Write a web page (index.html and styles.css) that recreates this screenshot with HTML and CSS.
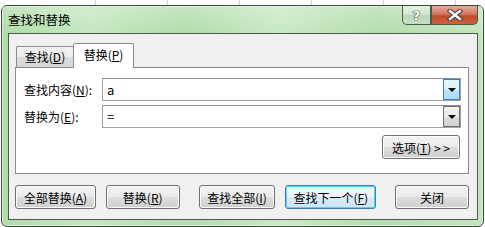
FILE: index.html
```html
<!DOCTYPE html>
<html lang="zh-CN">
<head>
  <meta charset="UTF-8">
  <meta name="viewport" content="width=device-width, initial-scale=1.0">
  <title>查找和替换</title>
  <link rel="stylesheet" href="styles.css">
</head>
<body>

  <div class="window">
    <div class="titlebar">
      <span class="title">查找和替换</span>
      <div class="caption-btns">
        <button class="cap-help">?</button>
        <button class="cap-close">
          <svg width="18" height="12" viewBox="0 0 18 12">
            <path d="M4 2 L14 10 M14 2 L4 10" stroke="#3a3a3a" stroke-width="4.4" stroke-linecap="square"/>
            <path d="M4 2 L14 10 M14 2 L4 10" stroke="#ffffff" stroke-width="2.4" stroke-linecap="square"/>
          </svg>
        </button>
      </div>
    </div>

    <div class="client">
      <!-- Abas -->
      <div class="tabs">
        <div class="tab">查找(<u>D</u>)</div>
        <div class="tab active">替换(<u>P</u>)</div>
      </div>

      <div class="panel">
        <div class="row">
          <label class="row-label">查找内容(<u>N</u>):</label>
          <div class="combo">
            <span class="combo-text">a</span>
            <span class="combo-btn hot"><i class="arrow"></i></span>
          </div>
        </div>
        <div class="row">
          <label class="row-label">替换为(<u>E</u>):</label>
          <div class="combo">
            <span class="combo-text">=</span>
            <span class="combo-btn"><i class="arrow"></i></span>
          </div>
        </div>
        <div class="options-row">
          <button class="btn btn-options">选项(<u>T</u>) &gt; &gt;</button>
        </div>
      </div>

      <!-- Botões de ação -->
      <div class="actions">
        <button class="btn w81">全部替换(<u>A</u>)</button>
        <button class="btn w74 gap10">替换(<u>R</u>)</button>
        <button class="btn w77 gap19">查找全部(<u>I</u>)</button>
        <button class="btn w91 gap10 focused">查找下一个(<u>F</u>)</button>
        <button class="btn w74 gap19">关闭</button>
      </div>
    </div>
  </div>

</body>
</html>
```

FILE: styles.css
```css
/* Fundo da planilha */
body {
  margin: 0;
  padding: 5px 0 0 1px;
  height: 227px;
  box-sizing: border-box;
  overflow: hidden;
  font-family: "Noto Sans CJK SC", "Microsoft YaHei", sans-serif;
  font-size: 12px;
  color: #000;
  background: repeating-linear-gradient(90deg, #fff 0 71px, #d4d4d4 71px 72px);
  background-position: 24px 0;
}

u {
  text-decoration: underline;
  text-underline-offset: 1px;
}

/* Janela */
.window {
  width: 483px;
  height: 222px;
  box-sizing: border-box;
  border: 1px solid #3a4a3a;
  border-radius: 6px;
  background: linear-gradient(90deg, #b0dcaa 0%, #c4e8be 18%, #b2dcac 38%, #c8eac2 58%, #b4ddae 78%, #c2e6bc 100%);
  box-shadow: inset 0 0 0 1px #d8f0d4;
}

.titlebar {
  height: 27px;
  display: flex;
  justify-content: space-between;
  align-items: flex-start;
  padding-left: 6px;
  background: linear-gradient(180deg, rgba(255,255,255,0.25), rgba(255,255,255,0));
}

.title {
  font-size: 12.5px;
  line-height: 14px;
  margin-top: 7px;
}

.caption-btns {
  display: flex;
  margin-right: 5px;
}

.caption-btns button {
  height: 19px;
  border: 1px solid #4a5a4a;
  border-top: none;
  padding: 0;
  display: flex;
  align-items: center;
  justify-content: center;
}

.cap-help {
  width: 29px;
  border-radius: 0 0 0 5px;
  background: linear-gradient(180deg, #e6f2e4 0%, #cfe3cc 50%, #bcd6b8 51%, #c8e0c4 100%);
  font-family: "DejaVu Sans", sans-serif;
  font-size: 13px;
  font-weight: bold;
  color: #fff;
  text-shadow: 0 0 1px #333, 0 0 1px #333, 0 0 1px #333;
}

.cap-close {
  width: 47px;
  border-left: none;
  border-radius: 0 0 5px 0;
  background: linear-gradient(180deg, #e9a898 0%, #d27a63 45%, #c14a2a 55%, #d0603f 100%);
  border-color: #5a2a20;
}

/* Área cliente */
.client {
  height: 187px;
  margin: 0 5px 0 6px;
  box-sizing: border-box;
  border: 1px solid #4b5a4b;
  background: #f0f0f0;
  padding: 0 8px 0 6px;
}

.tabs {
  display: flex;
  align-items: flex-end;
  height: 33px;
  padding-left: 1px;
  position: relative;
  z-index: 1;
}

.tab {
  box-sizing: border-box;
  height: 21px;
  width: 57px;
  border: 1px solid #898c95;
  border-right: none;
  border-bottom: none;
  border-radius: 2px 0 0 0;
  background: linear-gradient(180deg, #f2f2f2 0%, #ebebeb 50%, #dddddd 51%, #d6d6d6 100%);
  text-align: center;
  line-height: 20px;
}

.tab.active {
  height: 25px;
  width: 61px;
  border-right: 1px solid #898c95;
  border-radius: 2px 2px 0 0;
  background: #fff;
  margin-bottom: -1px;
  line-height: 22px;
}

.panel {
  box-sizing: border-box;
  height: 107px;
  border: 1px solid #898c95;
  background: #fff;
  padding: 10px 7px 10px 8px;
}

.row {
  display: flex;
  align-items: center;
  height: 23px;
  margin-bottom: 4px;
}

.row-label {
  width: 78px;
  flex: none;
}

.combo {
  flex: 1;
  height: 23px;
  box-sizing: border-box;
  border: 1px solid #a0a0a0;
  border-top-color: #8e8f8f;
  display: flex;
  align-items: center;
  justify-content: space-between;
}

.combo-text {
  padding-left: 4px;
  font-size: 13px;
}

.combo-btn {
  width: 17px;
  height: 21px;
  box-sizing: border-box;
  border: 1px solid #707070;
  background: linear-gradient(180deg, #f2f2f2 0%, #ebebeb 50%, #dddddd 51%, #cfcfcf 100%);
  display: flex;
  align-items: center;
  justify-content: center;
}

.combo-btn.hot {
  border-color: #3c7fb1;
  background: linear-gradient(180deg, #eaf6fd 0%, #d9f0fc 50%, #bee6fd 51%, #a7d9f5 100%);
}

.arrow {
  width: 0;
  height: 0;
  border-left: 4px solid transparent;
  border-right: 4px solid transparent;
  border-top: 4px solid #000;
}

.options-row {
  display: flex;
  justify-content: flex-end;
  margin-top: 7px;
  padding-right: 1px;
}

/* Botões */
.btn {
  height: 24px;
  box-sizing: border-box;
  border: 1px solid #707070;
  border-radius: 3px;
  background: linear-gradient(180deg, #f2f2f2 0%, #ebebeb 50%, #dddddd 51%, #cfcfcf 100%);
  box-shadow: inset 0 0 0 1px #fcfcfc;
  font-family: inherit;
  font-size: 12px;
  color: #000;
  padding: 0;
  cursor: pointer;
}

.btn-options {
  width: 78px;
}

.btn.focused {
  border-color: #3c7fb1;
  box-shadow: inset 0 0 0 1px #48d8fb;
  background: linear-gradient(180deg, #f4f9fc 0%, #ecf5fb 50%, #dcebf5 51%, #d0e4f2 100%);
}

.actions {
  display: flex;
  margin-top: 11px;
}

.w81 { width: 81px; }
.w74 { width: 74px; }
.w77 { width: 77px; }
.w91 { width: 91px; }
.gap10 { margin-left: 10px; }
.gap19 { margin-left: 19px; }
```
